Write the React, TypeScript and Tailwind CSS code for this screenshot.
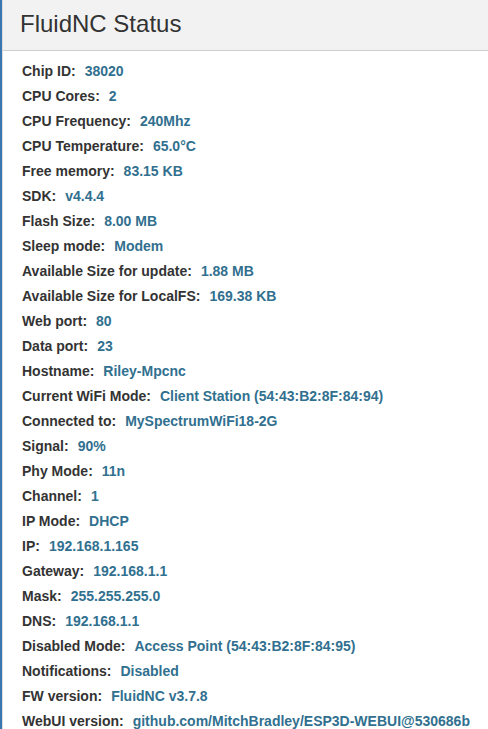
const rows: [string, string][] = [
  ['Chip ID', '38020'],
  ['CPU Cores', '2'],
  ['CPU Frequency', '240Mhz'],
  ['CPU Temperature', '65.0°C'],
  ['Free memory', '83.15 KB'],
  ['SDK', 'v4.4.4'],
  ['Flash Size', '8.00 MB'],
  ['Sleep mode', 'Modem'],
  ['Available Size for update', '1.88 MB'],
  ['Available Size for LocalFS', '169.38 KB'],
  ['Web port', '80'],
  ['Data port', '23'],
  ['Hostname', 'Riley-Mpcnc'],
  ['Current WiFi Mode', 'Client Station (54:43:B2:8F:84:94)'],
  ['Connected to', 'MySpectrumWiFi18-2G'],
  ['Signal', '90%'],
  ['Phy Mode', '11n'],
  ['Channel', '1'],
  ['IP Mode', 'DHCP'],
  ['IP', '192.168.1.165'],
  ['Gateway', '192.168.1.1'],
  ['Mask', '255.255.255.0'],
  ['DNS', '192.168.1.1'],
  ['Disabled Mode', 'Access Point (54:43:B2:8F:84:95)'],
  ['Notifications', 'Disabled'],
  ['FW version', 'FluidNC v3.7.8'],
  ['WebUI version', 'github.com/MitchBradley/ESP3D-WEBUI@530686b'],
]

export default function App () {
  return (
    <div className="flex h-[729px] w-[488px] overflow-hidden bg-white font-['Liberation_Sans',Arial,sans-serif] text-[#333]">
      <div className="w-[2px] shrink-0 bg-[#3a76b0]" />
      <div className="flex min-w-0 flex-1 flex-col border-l border-[#ddd]">
        <div className="h-[51px] shrink-0 border-b border-[#cfcfcf] bg-[#f2f2f2] pl-[17px] pt-[10px]">
          <h3 className="text-[24px] leading-[28px]">FluidNC Status</h3>
        </div>
        <div className="flex flex-col pl-[19px] pt-[8px]">
          {rows.map(([label, value]) => (
            <div key={label} className="h-[25px] whitespace-nowrap text-[14px] font-bold leading-[25px]">
              <span>{label}:</span>
              <span className="ml-[9px] text-[#31708f]">{value}</span>
            </div>
          ))}
        </div>
      </div>
    </div>
  )
}
